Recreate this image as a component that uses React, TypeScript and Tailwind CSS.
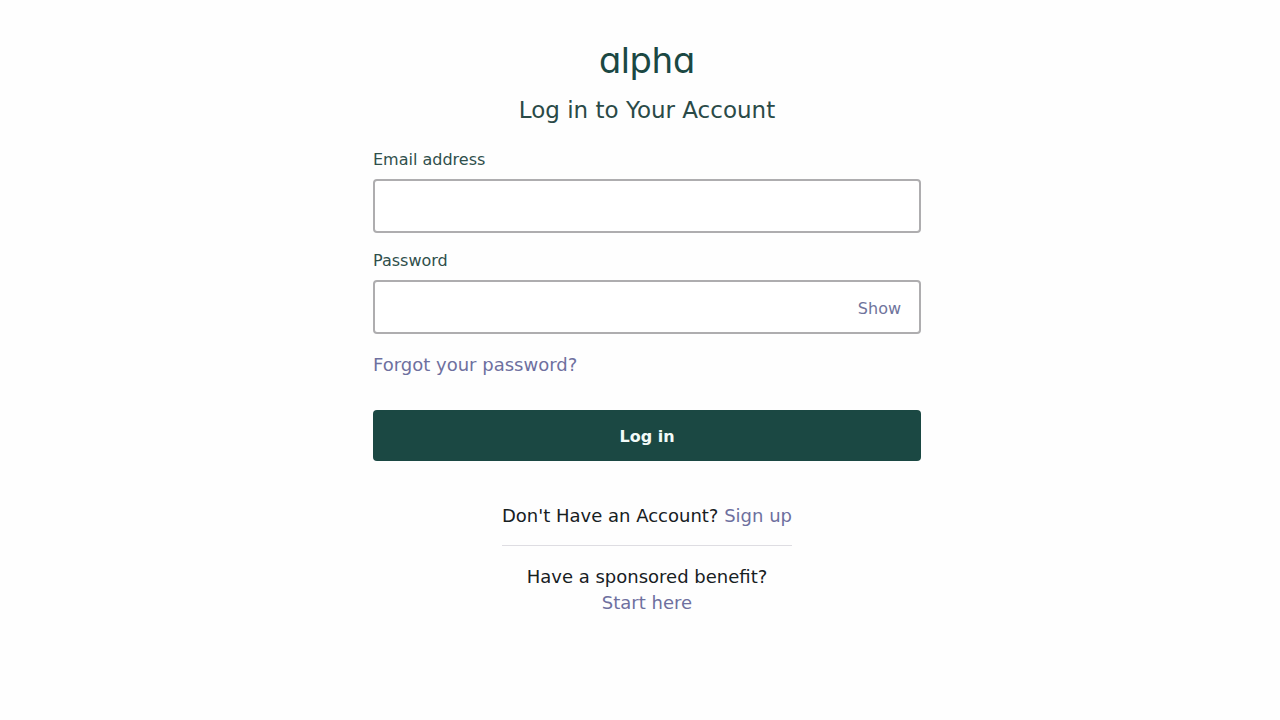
import { useState } from "react";

const fieldClass =
  "h-[54px] w-full rounded border-2 border-[#aeadaf] bg-white px-4 text-base text-[#1b4843] outline-none focus:border-[#1b4843]";

export default function App() {
  const [visible, setVisible] = useState(false);

  return (
    <main className="flex min-h-screen flex-col items-center bg-[#fefefe] pt-10 pl-3.5 font-['DejaVu_Sans',sans-serif] text-[18px] leading-[26px] text-[#17201f]">
      <div className="font-['Inter',sans-serif] text-4xl leading-10 font-normal text-[#1b4843] [font-feature-settings:'cv11']">
        alpha
      </div>
      <h1 className="mt-3.5 text-[23px] leading-8 text-[#2a4a47]">Log in to Your Account</h1>

      <form
        className="mt-6 flex w-full max-w-[548px] flex-col"
        onSubmit={(event) => event.preventDefault()}
      >
        <label htmlFor="email" className="text-base leading-5 text-[#2f4f4b]">
          Email address
        </label>
        <input id="email" type="email" className={`${fieldClass} mt-[9px]`} />

        <label htmlFor="password" className="mt-[18px] text-base leading-5 text-[#2f4f4b]">
          Password
        </label>
        <div className="relative mt-[9px]">
          <input
            id="password"
            type={visible ? "text" : "password"}
            className={`${fieldClass} pr-20`}
          />
          <button
            type="button"
            onClick={() => setVisible(!visible)}
            className="absolute inset-y-0 right-5 pt-1 text-base text-[#6f749c]"
          >
            {visible ? "Hide" : "Show"}
          </button>
        </div>

        <a href="#forgot" className="mt-[18px] self-start text-[#6e709f]">
          Forgot your password?
        </a>

        <button
          type="submit"
          className="mt-8 h-[51px] rounded bg-[#1b4843] pt-0.5 text-base font-bold text-[#f2faf8]"
        >
          Log in
        </button>
      </form>

      <p className="mt-[42px] border-b border-[#dedde2] pb-4">
        Don't Have an Account?{" "}
        <a href="#signup" className="text-[#6e709f]">
          Sign up
        </a>
      </p>
      <p className="mt-[18px] text-center">
        Have a sponsored benefit?
        <a href="#start" className="block text-[#6e709f]">
          Start here
        </a>
      </p>
    </main>
  );
}
